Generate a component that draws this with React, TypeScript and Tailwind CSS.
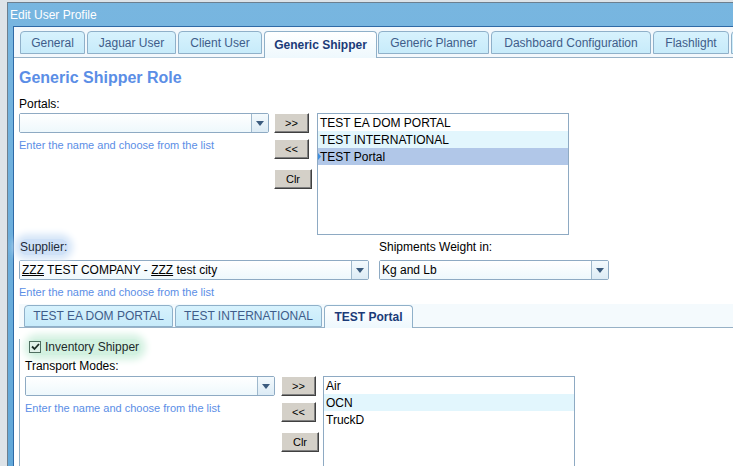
import React from 'react';

const help = 'text-[11px] leading-[14px] text-[#5b8ee6]';

function Arrow() {
  return (
    <div className="flex w-[17px] items-center justify-center border-l border-[#9fb8cc] bg-gradient-to-b from-[#f4fafd] to-[#dcebf5]">
      <svg width="8" height="5" viewBox="0 0 8 5">
        <path d="M0 0h8L4 5z" fill="#3b5b7e" />
      </svg>
    </div>
  );
}

function Combo({ w, value }: { w: string; value?: React.ReactNode }) {
  return (
    <div className={`flex h-[20px] rounded-[2px] border border-[#8eaac3] ${w}`}>
      <div className="flex flex-1 items-center bg-gradient-to-b from-white to-[#eef8fc] pl-[2px] text-[12px] text-black">
        {value}
      </div>
      <Arrow />
    </div>
  );
}

function Btn({ label, w, mt }: { label: string; w: string; mt: string }) {
  return (
    <div
      className={`flex h-[20px] items-center justify-center border border-t-white border-l-white border-r-[#404040] border-b-[#404040] bg-[#d4d0c8] text-[11px] text-black shadow-[inset_-1px_-1px_0_#808080] ${w} ${mt}`}
    >
      {label}
    </div>
  );
}

function Buttons() {
  return (
    <div className="flex w-[38px] flex-col">
      <Btn label=">>" w="w-[35px]" mt="" />
      <Btn label="<<" w="w-[35px]" mt="mt-[6px]" />
      <Btn label="Clr" w="w-[38px]" mt="mt-[10px]" />
    </div>
  );
}

function ListBox({ items, sel, h }: { items: string[]; sel?: number; h: string }) {
  return (
    <div className={`w-[252px] border border-[#8eaac3] bg-white ${h}`}>
      {items.map((it, i) => (
        <div
          key={it}
          className={`relative flex h-[17px] items-center pl-[2px] text-[12px] text-black ${
            i === sel ? 'bg-[#b1c7e8]' : i % 2 === 1 ? 'bg-[#e2f6fd]' : ''
          }`}
        >
          {i === sel && (
            <svg className="absolute left-0 top-[5px]" width="3" height="7" viewBox="0 0 3 7">
              <path d="M0 0l3 3.5L0 7z" fill="#3d8fe0" />
            </svg>
          )}
          {it}
        </div>
      ))}
    </div>
  );
}

const mainTabs = [
  { t: 'General', w: 'w-[65px]' },
  { t: 'Jaguar User', w: 'w-[89px]' },
  { t: 'Client User', w: 'w-[84px]' },
  { t: 'Generic Shipper', w: 'w-[113px]', active: true },
  { t: 'Generic Planner', w: 'w-[111px]' },
  { t: 'Dashboard Configuration', w: 'w-[160px]' },
  { t: 'Flashlight', w: 'w-[76px]' },
  { t: '', w: 'w-[80px]' },
];

const innerTabs = [
  { t: 'TEST EA DOM PORTAL', w: 'w-[149px]' },
  { t: 'TEST INTERNATIONAL', w: 'w-[147px]' },
  { t: 'TEST Portal', w: 'w-[89px]', active: true },
];

function Tab({ t, w, active, h }: { t: string; w: string; active?: boolean; h: string }) {
  if (active) {
    return (
      <div
        className={`relative z-10 -mb-px mr-[1px] flex shrink-0 items-center justify-center rounded-t-[4px] border border-b-0 border-[#8fb0c9] bg-gradient-to-b from-white to-[#eef8fd] text-[12px] font-bold text-[#1b3a78] ${w} ${h}`}
      >
        {t}
      </div>
    );
  }
  return (
    <div
      className={`mr-[2px] flex shrink-0 items-center justify-center rounded-t-[4px] border border-[#8fb0c9] bg-gradient-to-b from-[#d7f2fd] to-[#c7ebfa] text-[12px] text-[#3f5d8a] ${w} ${h}`}
    >
      {t}
    </div>
  );
}

export default function App() {
  return (
    <div className="h-[466px] w-[733px] overflow-hidden bg-[#dde3e8] pl-[7px] pt-[2px] font-['Liberation_Sans',Arial,sans-serif]">
      <div className="flex h-full flex-col border-l border-t border-[#6d7f8e] bg-gradient-to-b from-[#78b6e0] to-[#62a8d9]">
        <div className="flex h-[23px] shrink-0 items-center pl-[2px] text-[12px] text-white">Edit User Profile</div>
        <div className="ml-[5px] flex flex-1 flex-col border-l border-t border-[#2f6aa6] bg-white">
          {/* main tabs */}
          <div className="flex h-[31px] shrink-0 items-end border-b border-[#97b1c6] bg-[#f3f8fc] pl-[6px]">
            {mainTabs.map((tb) =>
              tb.active ? (
                <Tab key={tb.t} t={tb.t} w={tb.w} active h="h-[27px]" />
              ) : (
                <div key={tb.t || 'more'} className="mb-[3px]">
                  <Tab t={tb.t} w={tb.w} h="h-[23px]" />
                </div>
              )
            )}
          </div>

          <div className="flex-1 pl-[5px]">
            <div className="mt-[10px] h-[20px] text-[16px] font-bold leading-[20px] text-[#5b8ee6]">Generic Shipper Role</div>

            <div className="mt-[8px] h-[16px] text-[12px] leading-[16px] text-black">Portals:</div>
            <div className="mt-[1px] flex">
              <div className="w-[250px]">
                <Combo w="w-[250px]" />
                <div className={`mt-[5px] ${help}`}>Enter the name and choose from the list</div>
              </div>
              <div className="ml-[5px]">
                <Buttons />
              </div>
              <div className="ml-[5px]">
                <ListBox items={['TEST EA DOM PORTAL', 'TEST INTERNATIONAL', 'TEST Portal']} sel={2} h="h-[122px]" />
              </div>
            </div>

            <div className="mt-[4px] flex">
              <div className="w-[360px]">
                <div className="flex h-[16px]">
                  <span className="rounded-full bg-[#cfe1f7] px-[1px] text-[12px] leading-[16px] text-[#1d2a3a] shadow-[0_0_7px_5px_#d6e6f8]">
                    Supplier:
                  </span>
                </div>
                <div className="mt-[5px]">
                  <Combo
                    w="w-[350px]"
                    value={
                      <span>
                        <span className="underline">ZZZ</span> TEST COMPANY - <span className="underline">ZZZ</span> test city
                      </span>
                    }
                  />
                </div>
              </div>
              <div>
                <div className="h-[16px] text-[12px] leading-[16px] text-black">Shipments Weight in:</div>
                <div className="mt-[5px]">
                  <Combo w="w-[230px]" value="Kg and Lb" />
                </div>
              </div>
            </div>
            <div className={`mt-[5px] ${help}`}>Enter the name and choose from the list</div>

            {/* inner tabs */}
            <div className="mt-[5px] flex h-[24px] items-end border-b border-[#97b1c6] bg-[#f4fafd] pl-[5px]">
              {innerTabs.map((tb) =>
                tb.active ? (
                  <Tab key={tb.t} t={tb.t} w={tb.w} active h="h-[23px]" />
                ) : (
                  <Tab key={tb.t} t={tb.t} w={tb.w} h="h-[22px]" />
                )
              )}
            </div>
            <div className="border-l border-[#97b1c6] pl-[5px]">
              <div className="mt-[11px] flex h-[16px] items-center pl-[4px]">
                <span className="flex items-center gap-[4px] rounded-full bg-[#d2f1e0] pr-[2px] shadow-[0_0_7px_5px_#d6f2e3]">
                  <span className="flex h-[12px] w-[12px] items-center justify-center border border-[#4f6e60] bg-[#e2f2ea]">
                    <svg width="9" height="8" viewBox="0 0 9 8">
                      <path d="M1 3.5l2.5 2.5L8 1" fill="none" stroke="#1d2d26" strokeWidth="1.8" />
                    </svg>
                  </span>
                  <span className="text-[12px] leading-[16px] text-[#1d2a2a]">Inventory Shipper</span>
                </span>
              </div>
              <div className="mt-[3px] h-[16px] text-[12px] leading-[16px] text-black">Transport Modes:</div>
              <div className="mt-[2px] flex">
                <div className="w-[250px]">
                  <Combo w="w-[250px]" />
                  <div className={`mt-[5px] ${help}`}>Enter the name and choose from the list</div>
                </div>
                <div className="ml-[6px]">
                  <Buttons />
                </div>
                <div className="ml-[4px]">
                  <ListBox items={['Air', 'OCN', 'TruckD']} h="h-[122px]" />
                </div>
              </div>
            </div>
          </div>
        </div>
      </div>
    </div>
  );
}
